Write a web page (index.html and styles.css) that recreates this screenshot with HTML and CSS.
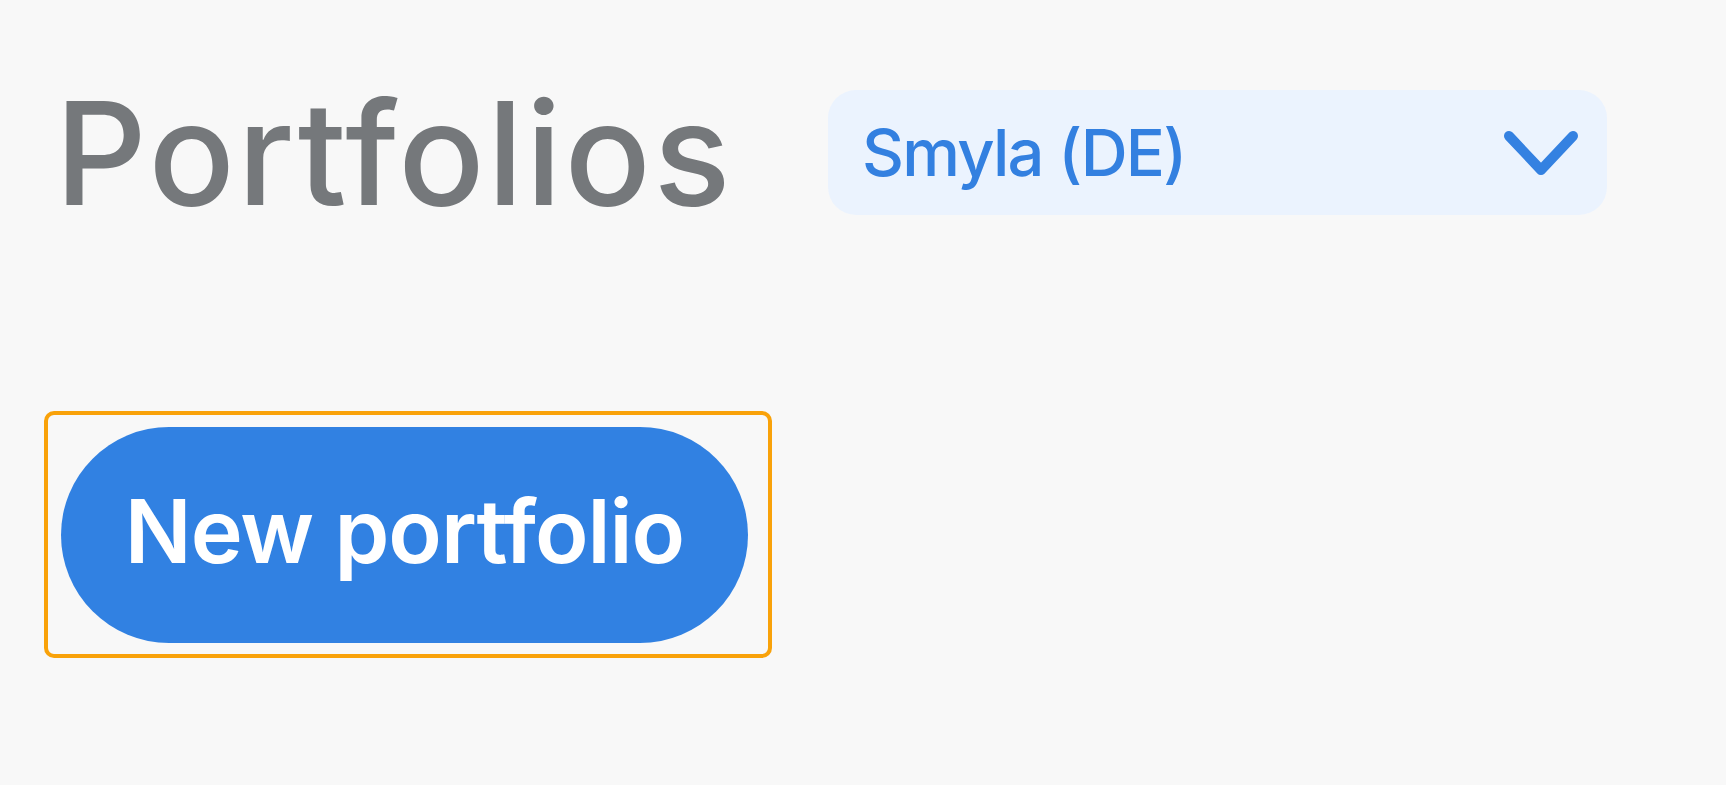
FILE: index.html
```html
<!DOCTYPE html>
<html lang="en">
<head>
<meta charset="utf-8">
<title>Portfolios</title>
<link rel="stylesheet" href="styles.css">
</head>
<body>
<main class="page">
  <header class="header">
    <h1 class="title">Portfolios</h1>
    <div class="select">
      <span class="select-label">Smyla (DE)</span>
      <svg class="chevron" width="76" height="46" viewBox="0 0 76 46" aria-hidden="true">
        <polyline points="6,6 38,40 70,6" fill="none" stroke="#3481E1" stroke-width="10" stroke-linecap="round" stroke-linejoin="round"/>
      </svg>
    </div>
  </header>
  <div class="actions">
    <div class="focus-ring">
      <button class="btn-primary" type="button">New portfolio</button>
    </div>
  </div>
</main>
</body>
</html>
```

FILE: styles.css
```css
html, body {
  margin: 0;
  padding: 0;
  background: #f8f8f8;
}

body {
  font-family: Inter, "Noto Sans", sans-serif;
}

.page {
  padding: 90px 0 0 0;
}

.header {
  display: flex;
  align-items: center;
  height: 125px;
  padding-left: 55px;
  gap: 95px;
}

.title {
  margin: 0;
  font-size: 143px;
  line-height: 1;
  font-weight: 500;
  color: #75787b;
  letter-spacing: 2.6px;
}

.select {
  box-sizing: border-box;
  flex: 0 0 779px;
  width: 779px;
  height: 125px;
  background: #ebf3fe;
  border-radius: 28px;
  display: flex;
  align-items: center;
  justify-content: space-between;
  padding: 0 28px 0 34px;
}

.select-label {
  font-size: 65px;
  line-height: 1;
  font-weight: 500;
  letter-spacing: -1.8px;
  color: #3380e0;
}

.chevron {
  display: block;
  flex-shrink: 0;
}

.actions {
  padding: 196px 0 0 44px;
}

.focus-ring {
  display: inline-block;
  border: 4px solid #f9a20a;
  border-radius: 10px;
  padding: 12px 20px 11px 13px;
}

.btn-primary {
  display: block;
  width: 687px;
  height: 216px;
  border: 0;
  border-radius: 108px;
  background: #3181e2;
  color: #ffffff;
  font-family: Inter, "Noto Sans", sans-serif;
  font-size: 88px;
  font-weight: 600;
  letter-spacing: -1px;
  line-height: 1;
  padding: 0 0 8px 0;
  cursor: pointer;
}
```
